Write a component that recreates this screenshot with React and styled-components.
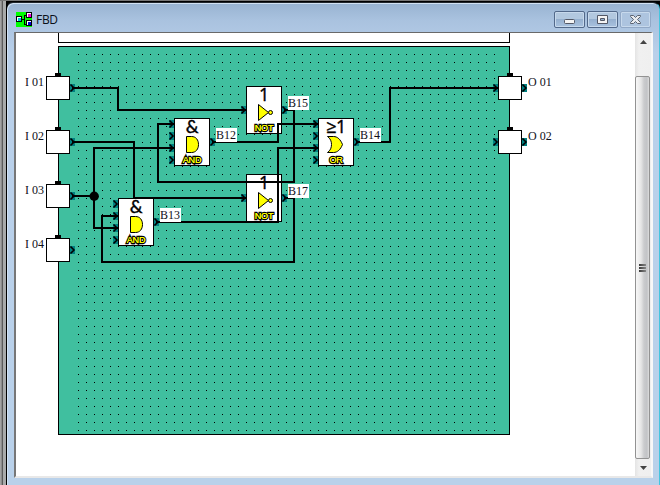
import React from "react";
import styled, { createGlobalStyle } from "styled-components";

const GlobalStyle = createGlobalStyle`
  * { box-sizing: border-box; }
  html, body { margin: 0; width: 660px; height: 485px; overflow: hidden; }
  svg { display: block; }
`;

const Desktop = styled.div`
  width: 660px;
  height: 485px;
  padding: 1px 0 0 6px;
  overflow: hidden;
  background: linear-gradient(90deg, #a3a3a3 0 1px, #8c8c8c 1px 2px, #5a5a5a 2px 3px, #a8aaaa 3px 6px, #000 6px 100%);
  border-top: 1px solid #777;
`;

const Window = styled.div`
  display: flex;
  flex-direction: column;
  height: 484px;
  border-left: 1px solid #000;
  border-top: 1px solid #20262c;
  border-right: 1px solid #45c5df;
  border-radius: 7px 7px 0 0;
  background: linear-gradient(#98b3d1 0, #a9c2df 17px, #b9d0ea 50px, #b9d1ea 100%);
  box-shadow: inset 1px 1px 0 #d2e2f3;
`;

const TitleBar = styled.header`
  display: flex;
  flex: none;
  align-items: center;
  height: 29px;
  padding: 4px 8px 0 9px;
`;

const Title = styled.span`
  flex: 1;
  margin-left: 4px;
  font: 12px/16px "Open Sans", "Noto Sans", sans-serif;
  letter-spacing: -0.3px;
  color: #0b0f18;
`;

const Caption = styled.div`
  display: flex;
  gap: 2px;
`;

const CaptionButton = styled.button`
  display: flex;
  align-items: center;
  justify-content: center;
  width: 31px;
  height: 17px;
  padding: 0;
  border: 1px solid ${(p) => (p.$faint ? "#91a8c6" : "#52698a")};
  border-radius: 2px;
  background: ${(p) => (p.$faint ? "#adc4df" : "linear-gradient(#b2c8df 0 45%, #94afce 46%, #a9c2df)")};
  box-shadow: inset 0 0 0 1px #c7d9ec;
`;

const Client = styled.main`
  display: flex;
  flex: none;
  width: 639px;
  height: 446px;
  margin-left: 7px;
  border-style: solid;
  border-width: 1px 2px 2px 2px;
  border-color: #696969 #f8f8f8 #e8e8e8 #777;
  background: #fff;
`;

const Canvas = styled.div`
  position: relative;
  width: 619px;
  height: 443px;
  overflow: hidden;
  background: #fff;
`;

const SheetEdge = styled.div`
  width: 452px;
  height: 10px;
  margin-left: 42px;
  border: solid #000;
  border-width: 0 1px 1px;
`;

const Board = styled.div`
  width: 452px;
  height: 389px;
  margin: 3px 0 0 42px;
  padding: 7px 14px 3px 19px;
  border: 1px solid #000;
  background: #40bf9f;
`;

const DotGrid = styled.div`
  width: 417px;
  height: 377px;
  background-image: conic-gradient(from 270deg at 1px 1px, #000 90deg, transparent 0);
  background-size: 8px 8px;
`;

const Node = styled.div`
  position: absolute;
  left: ${(p) => p.$x - 16}px;
  top: ${(p) => p.$y - 33}px;
  width: ${(p) => (p.$terminal ? 24 : 36)}px;
  height: ${(p) => (p.$terminal ? 24 : 48)}px;
  border: 1px solid #000;
  background: #fff;
`;

const Tab = styled.div`
  width: 6px;
  height: 4px;
  margin: -4px 0 0 8px;
  background: #000;
`;

const Symbol = styled.div`
  height: 15px;
  text-align: center;
  font: ${(p) => p.$size}px/15px ${(p) => (p.$amp ? '"Lato"' : '"Open Sans"')}, sans-serif;
  letter-spacing: -0.5px;
  color: #000;
  -webkit-text-stroke: 0.4px #000;
`;

const GateName = styled.div`
  position: absolute;
  left: 0;
  right: 0;
  bottom: 0;
  text-align: center;
  font: 9px/9px "Liberation Sans", sans-serif;
  color: #ffff00;
  -webkit-text-stroke: 2.4px #000;
  paint-order: stroke fill;
  letter-spacing: -0.2px;
  text-shadow: 0 0 0 #ffff00;
`;

const Overlay = styled.svg`
  position: absolute;
  inset: 0;
`;

const Label = styled.div`
  position: absolute;
  left: ${(p) => p.$x - 16}px;
  top: ${(p) => p.$y - 33}px;
  height: 14px;
  padding: ${(p) => (p.$boxed ? "0 1px 0 0" : "0")};
  background: ${(p) => (p.$boxed ? "#fff" : "transparent")};
  font: 12px/14px "Liberation Serif", serif;
  white-space: pre;
  color: #101018;
`;

const ScrollBar = styled.div`
  display: flex;
  flex-direction: column;
  width: 16px;
  height: 443px;
  background: linear-gradient(90deg, #e4e4e4, #f0f0f0 4px, #efefef);
`;

const ArrowButton = styled.div`
  display: flex;
  align-items: center;
  justify-content: center;
  height: ${(p) => p.$h}px;
  flex: none;
`;

const Thumb = styled.div`
  display: flex;
  flex: none;
  flex-direction: column;
  align-items: center;
  justify-content: center;
  gap: 1px;
  width: 15px;
  height: 383px;
  margin-top: 25px;
  border: 1px solid #929292;
  border-radius: 2px;
  background: linear-gradient(90deg, #f7f7f7, #e6e6e6 5px, #cacbcd 8px, #c2c3c6 11px, #dedede);
`;

const Grip = styled.i`
  width: 7px;
  height: 2px;
  background: linear-gradient(90deg, #383838, #888);
`;

const gates = [
  { x: 174, y: 118, symbol: "&", name: "AND", inputs: 4, out: 142 },
  { x: 246, y: 86, symbol: "1", name: "NOT", inputs: 1, out: 110 },
  { x: 318, y: 118, symbol: "≥1", name: "OR", inputs: 4, out: 142 },
  { x: 118, y: 198, symbol: "&", name: "AND", inputs: 4, out: 222 },
  { x: 246, y: 174, symbol: "1", name: "NOT", inputs: 1, out: 198 },
];

const terminals = [
  [46, 76], [46, 130], [46, 184], [46, 238], [498, 76], [498, 130],
];

const labels = [
  [216, 128, "B12"], [288, 96, "B15"], [360, 128, "B14"], [160, 208, "B13"], [288, 184, "B17"],
];

const names = [
  [25, 75, "I 01"], [25, 129, "I 02"], [25, 183, "I 03"], [25, 237, "I 04"],
  [528, 75, "O 01"], [528, 129, "O 02"],
];

const pins = [
  ...[88, 142, 196, 250].map((y) => [70, y]),
  ...[88, 142].flatMap((y) => [[493, y], [522, y]]),
  ...gates.flatMap((g) => [
    ...(g.inputs === 4 ? [6, 18, 30, 42] : [24]).map((d) => [g.x - 5, g.y + d]),
    [g.x + 36, g.out],
  ]),
];

const wires = [
  "M72 88H118V110H246",
  "M72 142H134V198H246",
  "M72 196H94",
  "M174 148H94V228H118",
  "M212 142H278V124H318",
  "M356 142H390V88H498",
  "M284 110H294V182H158V124H174",
  "M284 198H294V262H102V216H118",
  "M156 222H278V148H318",
];

function GateShape({ name, x, y }) {
  if (name === "AND") return <path d={`M${x + 12.5} ${y + 18.5}h5c4.5 0 7 3.5 7 8s-2.500 8-7 8h-5z`} />;
  if (name === "OR") return <path d={`M${x + 9.5} ${y + 18.5}h6c4 0 7 3 9 8-2 5-5 8-9 8h-6c3-2 4-5 4-8s-1-6-4-8z`} />;
  return (
    <>
      <path d={`M${x + 12.5} ${y + 18.5}v16l10-8z`} />
      <circle cx={x + 24.5} cy={y + 26.5} r="2" />
    </>
  );
}

function Diagram() {
  return (
    <Canvas>
      <SheetEdge />
      <Board><DotGrid /></Board>
      {terminals.map(([x, y]) => (
        <Node key={`${x}-${y}`} $x={x} $y={y} $terminal><Tab /></Node>
      ))}
      {gates.map((g) => (
        <Node key={`${g.x}-${g.y}`} $x={g.x} $y={g.y}>
          <Symbol $amp={g.symbol === "&"} $size={18}>{g.symbol}</Symbol>
          <GateName>{g.name}</GateName>
        </Node>
      ))}
      <Overlay width="619" height="443" viewBox="16 33 619 443">
        <g fill="#ffff00" stroke="#000" strokeWidth="1">
          {gates.map((g) => <GateShape key={`${g.x}-${g.y}`} {...g} />)}
        </g>
        {pins.map(([x, y]) => (
          <g key={`${x}-${y}`}>
            <rect x={x} y={y - 4} width="5" height="8" fill="#008080" />
            <path d={`M${x + 0.5} ${y - 3.5}l3.500 3.5-3.500 3.5`} fill="none" stroke="#000" strokeWidth="1.6" />
          </g>
        ))}
        <g fill="none" stroke="#000" strokeWidth="2">
          {wires.map((d) => <path key={d} d={d} />)}
        </g>
        <circle cx="94.2" cy="196.2" r="4.7" />
      </Overlay>
      {labels.map(([x, y, text]) => <Label key={text} $x={x} $y={y} $boxed>{text}</Label>)}
      {names.map(([x, y, text]) => <Label key={text} $x={x} $y={y}>{text}</Label>)}
    </Canvas>
  );
}

function AppIcon() {
  return (
    <svg width="16" height="16" shapeRendering="crispEdges">
      <rect width="16" height="15" fill="#00ff00" />
      <path d="M5 7.5h4M8.5 3v10M8 3.5h3M8 12.5h3" stroke="#000" fill="none" />
      <g fill="#fff" stroke="#000">
        <rect x=".5" y="4.5" width="5" height="5" />
        <rect x="10.5" y=".5" width="5" height="5" />
        <rect x="10.5" y="8.5" width="5" height="5" />
      </g>
      <rect x="2" y="6" width="3" height="3" fill="#00c8d8" />
      <rect x="12" y="2" width="3" height="3" fill="#f000e0" />
      <rect x="12" y="10" width="3" height="3" fill="#0000d0" />
    </svg>
  );
}

export default function App() {
  return (
    <Desktop>
      <GlobalStyle />
      <Window>
        <TitleBar>
          <AppIcon />
          <Title>FBD</Title>
          <Caption>
            <CaptionButton aria-label="Minimize">
              <svg width="13" height="13"><rect x="1.5" y="6.5" width="10" height="4" rx="1" fill="#f4f4f4" stroke="#535866" /></svg>
            </CaptionButton>
            <CaptionButton aria-label="Maximize">
              <svg width="13" height="11">
                <path fillRule="evenodd" d="M1.5 1.5h10v8h-10zM4.5 4.5h4v2h-4z" fill="#f4f4f4" stroke="#535866" />
              </svg>
            </CaptionButton>
            <CaptionButton $faint aria-label="Close">
              <svg width="13" height="11">
                <path d="M1.500 1.500h3l2 2 2-2h3v1l-3 3 3 3v1h-3l-2-2-2 2h-3v-1l3-3-3-3z" fill="#e8ebef" stroke="#5c6472" />
              </svg>
            </CaptionButton>
          </Caption>
        </TitleBar>
        <Client>
          <Diagram />
          <ScrollBar>
            <ArrowButton $h={18}>
              <svg width="7" height="4"><path d="M0 4l3.500-4L7 4z" fill="#444" /></svg>
            </ArrowButton>
            <Thumb><Grip /><Grip /><Grip /></Thumb>
            <ArrowButton $h={17}>
              <svg width="7" height="4"><path d="M0 0l3.500 4L7 0z" fill="#444" /></svg>
            </ArrowButton>
          </ScrollBar>
        </Client>
      </Window>
    </Desktop>
  );
}
